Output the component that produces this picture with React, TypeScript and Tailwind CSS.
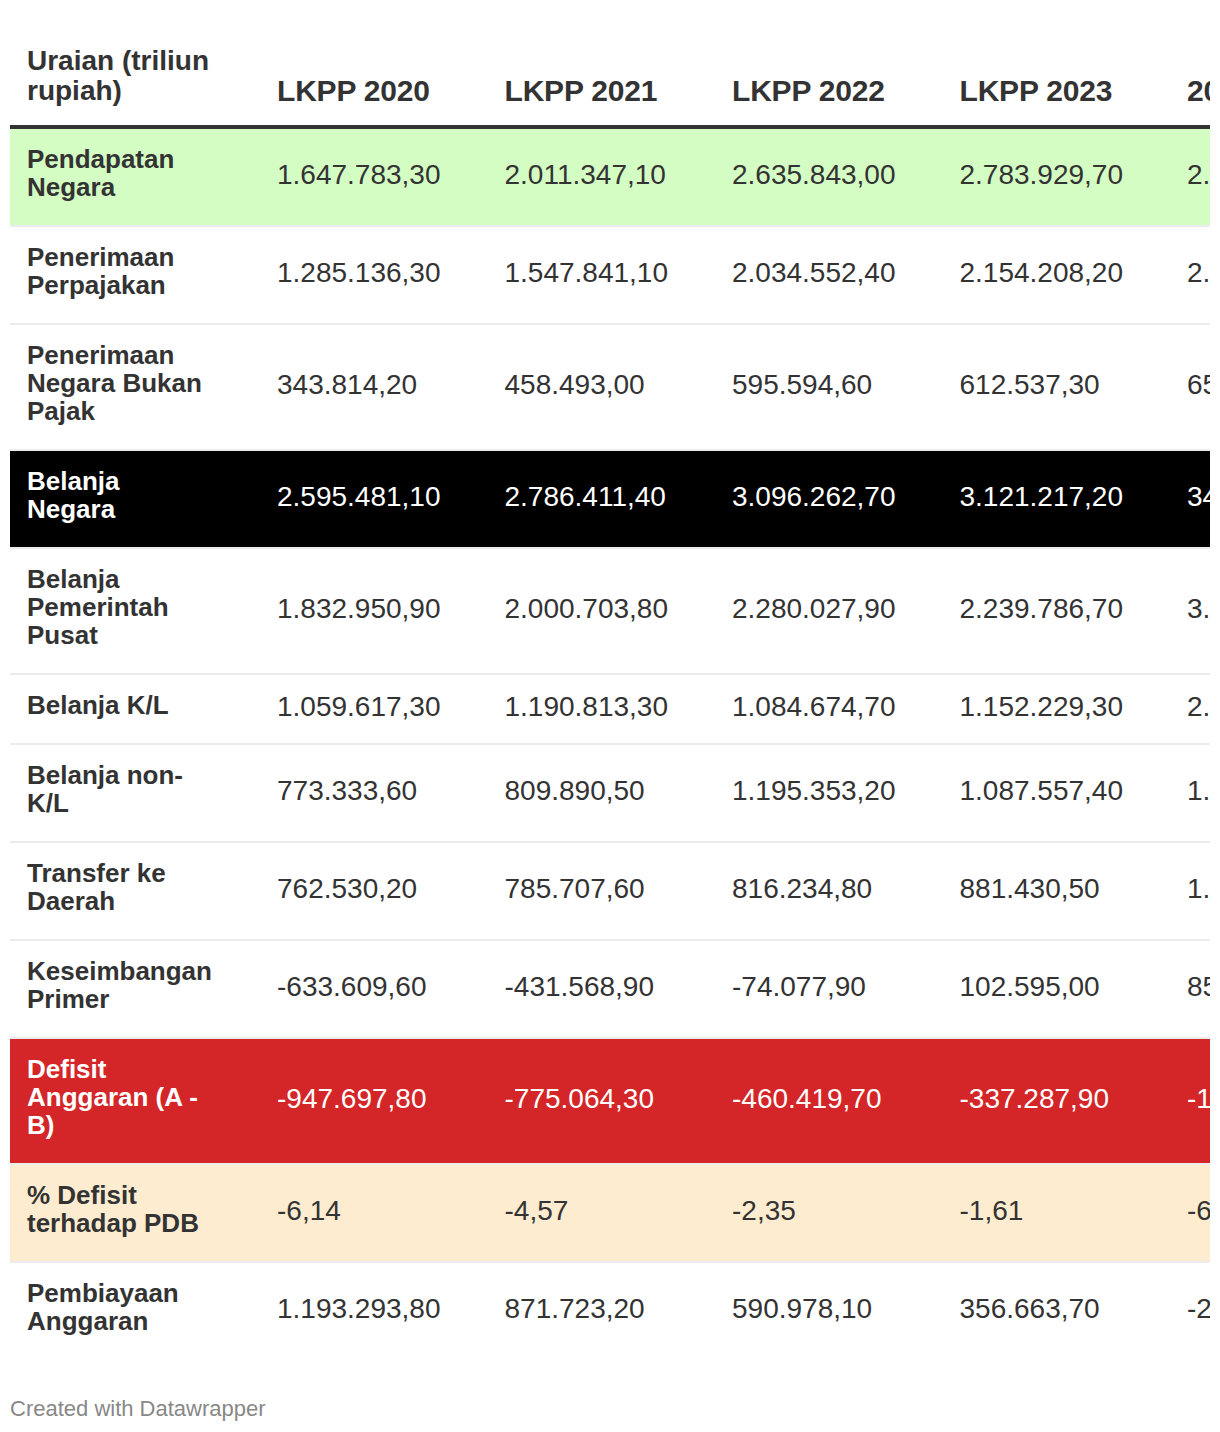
import React from "react";

type Row = {
  label: string;
  values: string[];
  variant?: "green" | "black" | "red" | "beige";
  last?: boolean;
};

const headers = ["LKPP 2020", "LKPP 2021", "LKPP 2022", "LKPP 2023", "2024 (Outlook)"];

const rows: Row[] = [
  { label: "Pendapatan Negara", values: ["1.647.783,30", "2.011.347,10", "2.635.843,00", "2.783.929,70", "2.802.286,40"], variant: "green" },
  { label: "Penerimaan Perpajakan", values: ["1.285.136,30", "1.547.841,10", "2.034.552,40", "2.154.208,20", "2.309.859,80"] },
  { label: "Penerimaan Negara Bukan Pajak", values: ["343.814,20", "458.493,00", "595.594,60", "612.537,30", "654.315,70"] },
  { label: "Belanja Negara", values: ["2.595.481,10", "2.786.411,40", "3.096.262,70", "3.121.217,20", "3412208,10"], variant: "black" },
  { label: "Belanja Pemerintah Pusat", values: ["1.832.950,90", "2.000.703,80", "2.280.027,90", "2.239.786,70", "3.000.142,90"] },
  { label: "Belanja K/L", values: ["1.059.617,30", "1.190.813,30", "1.084.674,70", "1.152.229,30", "2.090.842,60"] },
  { label: "Belanja non-K/L", values: ["773.333,60", "809.890,50", "1.195.353,20", "1.087.557,40", "1.331.246,30"] },
  { label: "Transfer ke Daerah", values: ["762.530,20", "785.707,60", "816.234,80", "881.430,50", "1.040.066,20"] },
  { label: "Keseimbangan Primer", values: ["-633.609,60", "-431.568,90", "-74.077,90", "102.595,00", "85.322,40"] },
  { label: "Defisit Anggaran (A - B)", values: ["-947.697,80", "-775.064,30", "-460.419,70", "-337.287,90", "-120.451,30"], variant: "red" },
  { label: "% Defisit terhadap PDB", values: ["-6,14", "-4,57", "-2,35", "-1,61", "-6,02"], variant: "beige" },
  { label: "Pembiayaan Anggaran", values: ["1.193.293,80", "871.723,20", "590.978,10", "356.663,70", "-209.924,80"], last: true },
];

function rowClasses(v?: Row["variant"]) {
  switch (v) {
    case "green":
      return "bg-[#d4fdc4] text-[#333333]";
    case "black":
      return "bg-[#000000] text-white";
    case "red":
      return "bg-[#d42628] text-white";
    case "beige":
      return "bg-[#feecd0] text-[#333333]";
    default:
      return "bg-white text-[#333333]";
  }
}

export default function App() {
  return (
    <div
      className="w-[1220px] min-h-[1432px] bg-white px-[10px] pt-[34px]"
      style={{ fontFamily: '"Liberation Sans", Arial, sans-serif' }}
    >
      <div className="w-[1200px] overflow-hidden">
        <table className="table-fixed border-collapse w-[1615px]">
          <colgroup>
            <col className="w-[250px]" />
            {headers.map((h) => (
              <col key={h} className="w-[227.5px]" />
            ))}
            <col className="w-[227.5px]" />
          </colgroup>
          <thead>
            <tr className="border-b-[4px] border-[#333333]">
              <th className="pl-[17px] pr-[46px] pt-[12px] pb-[19px] text-left align-bottom text-[28px] leading-[30px] font-bold text-[#333333]">
                Uraian (triliun rupiah)
              </th>
              {headers.map((h) => (
                <th
                  key={h}
                  className="pl-[17px] pr-[10px] pt-[12px] pb-[19px] text-left align-bottom text-[30px] leading-[30px] font-bold text-[#333333] whitespace-nowrap tracking-[-0.2px]"
                >
                  {h}
                </th>
              ))}
              <th />
            </tr>
          </thead>
          <tbody>
            {rows.map((r) => (
              <tr
                key={r.label}
                className={`${rowClasses(r.variant)} ${r.last ? "" : "border-b-[2px] border-[#ececec]"}`}
              >
                <td className="pl-[17px] pr-[46px] pt-[16px] pb-[24px] align-middle text-[26px] leading-[28px] font-bold">
                  {r.label}
                </td>
                {r.values.map((v, i) => (
                  <td
                    key={i}
                    className="pl-[17px] pr-[10px] pt-[18px] pb-[22px] align-middle text-[28px] leading-[28px] whitespace-nowrap tabular-nums"
                  >
                    {v}
                  </td>
                ))}
                <td />
              </tr>
            ))}
          </tbody>
        </table>
      </div>
      <div className="mt-[36px] text-[22px] leading-[28px] text-[#888888]">Created with Datawrapper</div>
    </div>
  );
}
